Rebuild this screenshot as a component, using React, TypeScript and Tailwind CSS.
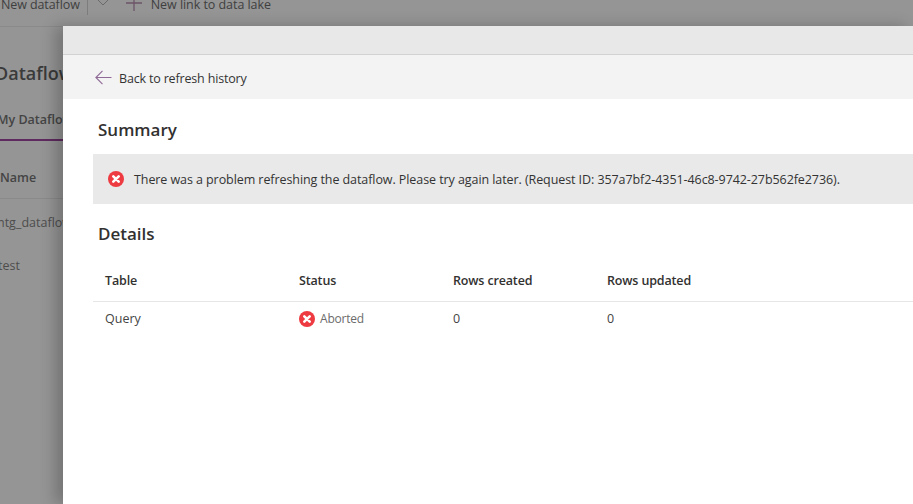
import React from "react";

function ErrorIcon({ size }: { size: number }) {
  return (
    <svg width={size} height={size} viewBox="0 0 16 16" className="shrink-0">
      <circle cx="8" cy="8" r="8" fill="#ee3a41" />
      <path d="M5.3 5.3 L10.7 10.7 M10.7 5.3 L5.3 10.7" stroke="#fff" strokeWidth="2.6" strokeLinecap="round" />
    </svg>
  );
}

export default function App() {
  return (
    <div className="relative w-[913px] h-[504px] overflow-hidden bg-[#959595] font-['Open_Sans','Noto_Sans',sans-serif] text-[#3a3a3a]">
      {/* page behind the panel */}
      <div className="flex flex-col h-full">
        <div className="flex items-center h-[27px] border-b border-[#8a8a8a] pb-[15px] pl-[1px] text-[12.5px] text-[#3f3f3f]">
          <span className="tracking-[-0.1px]">New dataflow</span>
          <span className="ml-[7px] w-px h-[18px] bg-[#7d7d7d]" />
          <svg width="12" height="8" viewBox="0 0 12 8" className="ml-[9px] -mt-[6px]">
            <path d="M1 1 L6 6 L11 1" fill="none" stroke="#6a6a6a" strokeWidth="1" />
          </svg>
          <svg width="16" height="16" viewBox="0 0 16 16" className="ml-[17px] -mt-[6px]">
            <path d="M0 8 H16 M8 0 V16" fill="none" stroke="#6e5468" strokeWidth="1.3" />
          </svg>
          <span className="ml-[9px] tracking-[-0.05px]">New link to data lake</span>
        </div>
        <div className="-ml-[5px] pt-[33px] text-[18px] font-semibold text-[#3a3a3a] leading-[26px] whitespace-nowrap">Dataflows</div>
        <div className="-ml-[3px] pt-[25px] w-[66px] h-[55px] border-b-2 border-[#5f2a5f] text-[12.5px] font-semibold text-[#444] whitespace-nowrap overflow-hidden">My Dataflows</div>
        <div className="pl-0 pt-[28px] h-[58px] border-b border-[#8a8a8a] text-[12.5px] font-semibold text-[#444]">Name</div>
        <div className="-ml-[3px] pt-[15px] text-[12.5px] text-[#4d4d4d] whitespace-nowrap">ntg_dataflow</div>
        <div className="-ml-[2px] pt-[24px] text-[12.5px] text-[#4d4d4d]">test</div>
      </div>

      {/* side panel */}
      <div className="absolute left-[63px] top-[26px] right-0 bottom-0 bg-white shadow-[-8px_0_14px_rgba(0,0,0,0.22)] flex flex-col">
        <div className="h-[29px] bg-[#e8e8e8] border-b border-[#d2d2d2]" />
        <div className="h-[44px] bg-[#f3f3f3] flex items-center pl-[32px] text-[12.5px] tracking-[-0.17px] text-[#333]">
          <svg width="17" height="15" viewBox="0 0 17 15">
            <path d="M7.5 .8 L.9 7.5 L7.5 14.2 M1 7.5 H16.5" fill="none" stroke="#8f6a96" strokeWidth="1.1" />
          </svg>
          <span className="ml-[7px] pt-[5px]">Back to refresh history</span>
        </div>
        <div className="pl-[35px] pt-[19px] h-[55px] text-[17px] font-semibold leading-[24px] text-[#323130]">Summary</div>
        <div className="ml-[30px] h-[50px] bg-[#e9e9e9] flex items-center pl-[15px] text-[12.5px] tracking-[-0.077px] text-[#333] whitespace-nowrap">
          <ErrorIcon size={16} />
          <span className="ml-[10px] pt-[2px]">There was a problem refreshing the dataflow. Please try again later. (Request ID: 357a7bf2-4351-46c8-9742-27b562fe2736).</span>
        </div>
        <div className="pl-[35px] pt-[18px] h-[60px] text-[17px] font-semibold leading-[24px] text-[#323130]">Details</div>
        <div className="ml-[30px] grid grid-cols-[194px_154px_154px_1fr] h-[38px] pb-[2px] items-center border-b border-[#e6e6e6] pl-[12px] text-[12.5px] font-semibold tracking-[-0.15px] text-[#323130]">
          <span>Table</span>
          <span>Status</span>
          <span>Rows created</span>
          <span>Rows updated</span>
        </div>
        <div className="ml-[30px] grid grid-cols-[194px_154px_154px_1fr] h-[34px] items-center pl-[12px] text-[12.5px] text-[#444]">
          <span>Query</span>
          <span className="flex items-center gap-[5px] text-[#6b6b6b] text-[12px] tracking-[-0.2px]">
            <ErrorIcon size={16} />
            Aborted
          </span>
          <span>0</span>
          <span>0</span>
        </div>
      </div>
    </div>
  );
}
